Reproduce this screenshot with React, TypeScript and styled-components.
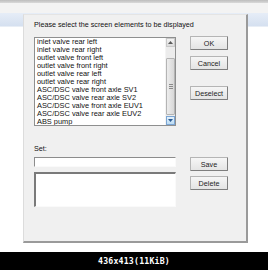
import React from "react";
import styled, { createGlobalStyle } from "styled-components";

const Global = createGlobalStyle`
  html, body { margin: 0; padding: 0; background: #ffffff; }
  body { width: 268px; height: 270px; overflow: hidden; font-family: "Liberation Sans", Arial, sans-serif; }
`;

const Page = styled.div`
  width: 268px;
  height: 270px;
  display: flex;
  flex-direction: column;
`;

const Desktop = styled.div`
  position: relative;
  height: 252px;
  background: #ffffff;
  display: flex;
  flex-direction: column;
`;

const TopEdge = styled.div`
  height: 3px;
  background: linear-gradient(#bdbdbd, #d9d9d9);
`;

const TopBar = styled.div`
  height: 10px;
  background: #f3f3f3;
`;

const BlueBand = styled.div`
  height: 13px;
  background: linear-gradient(#e6edf7, #d5e0f0);
  border-bottom: 1px solid #e8eef6;
`;

const Window = styled.div`
  position: absolute;
  left: 23px;
  top: 14px;
  width: 225px;
  height: 229px;
  box-sizing: border-box;
  background: #f0f0f0;
  border-left: 1px solid #dcdcdc;
  border-top: 1px solid #e4e4e4;
  border-right: 2px solid #9a9a9a;
  border-bottom: 2px solid #9a9a9a;
  padding: 6px 0 0 10px;
  display: flex;
  flex-direction: column;
  font-size: 7.2px;
  color: #111;
`;

const Label = styled.div<{ $mt?: number }>`
  height: 8px;
  line-height: 8px;
  white-space: nowrap;
  margin-top: ${(p) => p.$mt ?? 0}px;
`;

const Row = styled.div<{ $mt: number }>`
  display: flex;
  align-items: flex-start;
  margin-top: ${(p) => p.$mt}px;
`;

const ListBox = styled.div`
  width: 142px;
  height: 89px;
  box-sizing: border-box;
  border: 1px solid #8e8f8f;
  background: #fff;
  display: flex;
  overflow: hidden;
`;

const Items = styled.div`
  flex: 1;
  padding-left: 2px;
  overflow: hidden;
`;

const Item = styled.div`
  height: 8px;
  line-height: 8px;
  white-space: nowrap;
  font-size: 7.4px;
`;

const ScrollBar = styled.div`
  width: 9px;
  display: flex;
  flex-direction: column;
  background: #ececec;
  border-left: 1px solid #f4f4f4;
`;

const Arrow = styled.div<{ $hot?: boolean }>`
  height: 9px;
  box-sizing: border-box;
  border: 1px solid ${(p) => (p.$hot ? "#7ca6d4" : "#c9c9c9")};
  background: ${(p) => (p.$hot ? "linear-gradient(#e4f1fb, #bcdcf4)" : "linear-gradient(#f3f3f3, #dcdcdc)")};
  display: flex;
  align-items: center;
  justify-content: center;
`;

const Track = styled.div`
  flex: 1;
  display: flex;
  flex-direction: column;
  padding: 11px 0 1px;
`;

const Thumb = styled.div`
  flex: 1;
  box-sizing: border-box;
  border: 1px solid #b4b4b4;
  border-radius: 1px;
  background: linear-gradient(90deg, #ededed, #d8d8d8);
  display: flex;
  align-items: center;
  justify-content: center;
`;

const Grip = styled.div`
  width: 4px;
  height: 5px;
  background: repeating-linear-gradient(#8a8a8a 0 1px, transparent 1px 2px);
`;

const ButtonCol = styled.div<{ $gap: number }>`
  margin-left: 14px;
  display: flex;
  flex-direction: column;
  gap: ${(p) => p.$gap}px;
`;

const Button = styled.div<{ $mt?: number }>`
  width: 38px;
  height: 14px;
  box-sizing: border-box;
  margin-top: ${(p) => p.$mt ?? 0}px;
  border: 1px solid #b5b5b5;
  border-right-color: #7e7e7e;
  border-bottom-color: #7e7e7e;
  border-radius: 1px;
  background: linear-gradient(#f6f6f6, #e4e4e4);
  display: flex;
  align-items: center;
  justify-content: center;
  font-size: 7.2px;
  color: #222;
`;

const Stack = styled.div`
  display: flex;
  flex-direction: column;
  gap: 5px;
`;

const Input = styled.div<{ $h: number }>`
  width: 142px;
  height: ${(p) => p.$h}px;
  box-sizing: border-box;
  background: #fff;
  border-top: 1px solid #8c8c8c;
  border-left: 1px solid #8c8c8c;
  border-right: 1px solid #fafafa;
  border-bottom: 1px solid #fafafa;
`;

const TextBox = styled(Input)`
  border-top: 2px solid #7a7a7a;
  border-left: 2px solid #7a7a7a;
`;

const Caption = styled.div`
  height: 18px;
  background: #000;
  color: #fff;
  display: flex;
  align-items: center;
  justify-content: center;
  font-family: "DejaVu Sans Mono", monospace;
  font-weight: bold;
  font-size: 8.2px;
  letter-spacing: 0.2px;
`;

const items = [
  "inlet valve rear left",
  "inlet valve rear right",
  "outlet valve front left",
  "outlet valve front right",
  "outlet valve rear left",
  "outlet valve rear right",
  "ASC/DSC valve front axle SV1",
  "ASC/DSC valve rear axle SV2",
  "ASC/DSC valve front axle EUV1",
  "ASC/DSC valve rear axle EUV2",
  "ABS pump",
];

const Tri = ({ up, color }: { up?: boolean; color: string }) => (
  <svg width="5" height="3" viewBox="0 0 5 3">
    <path d={up ? "M0 3 L2.5 0 L5 3 Z" : "M0 0 L5 0 L2.5 3 Z"} fill={color} />
  </svg>
);

export default function App() {
  return (
    <Page>
      <Global />
      <Desktop>
        <TopEdge />
        <TopBar />
        <BlueBand />
        <Window>
          <Label>Please select the screen elements to be displayed</Label>
          <Row $mt={8}>
            <ListBox>
              <Items>
                {items.map((t) => (
                  <Item key={t}>{t}</Item>
                ))}
              </Items>
              <ScrollBar>
                <Arrow>
                  <Tri up color="#5a5a5a" />
                </Arrow>
                <Track>
                  <Thumb>
                    <Grip />
                  </Thumb>
                </Track>
                <Arrow $hot>
                  <Tri color="#2a5b94" />
                </Arrow>
              </ScrollBar>
            </ListBox>
            <ButtonCol $gap={6}>
              <Button $mt={-1}>OK</Button>
              <Button>Cancel</Button>
              <Button $mt={10}>Deselect</Button>
            </ButtonCol>
          </Row>
          <Label $mt={19}>Set:</Label>
          <Row $mt={4}>
            <Stack>
              <Input $h={10} />
              <TextBox $h={35} />
            </Stack>
            <ButtonCol $gap={5}>
              <Button>Save</Button>
              <Button>Delete</Button>
            </ButtonCol>
          </Row>
        </Window>
      </Desktop>
      <Caption>436x413(11KiB)</Caption>
    </Page>
  );
}
